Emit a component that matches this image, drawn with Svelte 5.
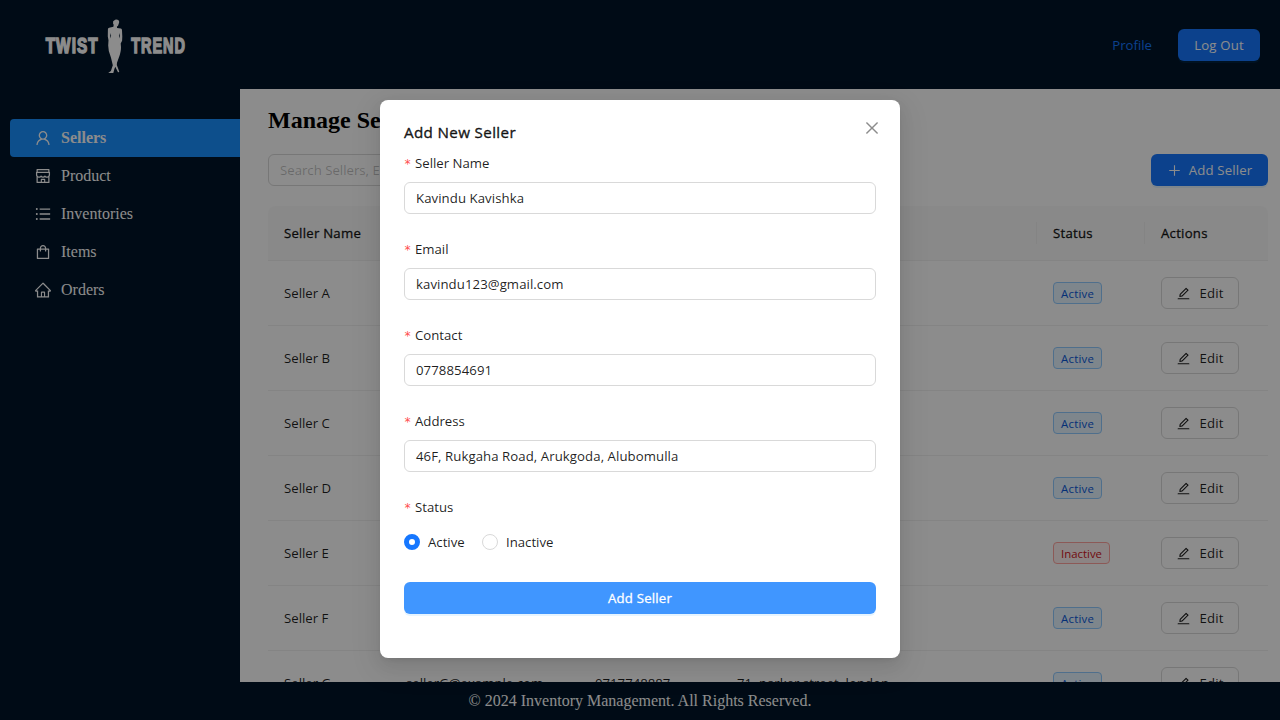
<script>
  const paths = {
    user: 'M858.5 763.6a374 374 0 00-80.6-119.5 375.63 375.63 0 00-119.5-80.6c-.4-.2-.8-.3-1.2-.5C719.5 518 760 444.7 760 362c0-137-111-248-248-248S264 225 264 362c0 82.7 40.5 156 102.8 201.1-.4.2-.8.3-1.2.5-44.8 18.9-85 46-119.5 80.6a375.63 375.63 0 00-80.6 119.5A371.7 371.7 0 00136 901.8a8 8 0 008 8.2h60c4.4 0 7.9-3.5 8-7.8 2-77.2 33-149.5 87.8-204.3 56.7-56.7 132-87.9 212.2-87.9s155.5 31.2 212.2 87.9C779 752.7 810 825 812 902.2c.1 4.4 3.6 7.8 8 7.8h60a8 8 0 008-8.2c-1-47.8-10.9-94.3-29.5-138.2zM512 534c-45.9 0-89.1-17.9-121.6-50.4S340 407.9 340 362c0-45.9 17.9-89.1 50.4-121.6S466.1 190 512 190s89.1 17.9 121.6 50.4S684 316.1 684 362c0 45.9-17.9 89.1-50.4 121.6S557.9 534 512 534z',
    shop: 'M882 272.1V144c0-17.7-14.3-32-32-32H174c-17.7 0-32 14.3-32 32v128.1c-16.7 1-30 14.9-30 31.9v131.7a177 177 0 0014.4 70.4c4.3 10.2 9.6 19.8 15.6 28.9v345c0 17.6 14.3 32 32 32h676c17.7 0 32-14.3 32-32V535a175 175 0 0015.6-28.9c9.5-22.3 14.4-46 14.4-70.4V304c0-17-13.3-30.9-30-31.9zM214 184h596v88H214v-88zm362 656.1H448V736h128v104.1zm234 0H640V704c0-17.7-14.3-32-32-32H416c-17.7 0-32 14.3-32 32v136.1H214V597.9c2.9 1.4 5.9 2.8 9 4 22.3 9.4 46 14.1 70.4 14.1s48-4.7 70.4-14.1c13.8-5.8 26.8-13.2 38.7-22.1.2-.1.4-.1.6 0a180.4 180.4 0 0038.7 22.1c22.3 9.4 46 14.1 70.4 14.1 24.4 0 48-4.7 70.4-14.1 13.8-5.8 26.8-13.2 38.7-22.1.2-.1.4-.1.6 0a180.4 180.4 0 0038.7 22.1c22.3 9.4 46 14.1 70.4 14.1 24.4 0 48-4.7 70.4-14.1 3-1.3 6-2.6 9-4v242.2zm30-404.4c0 59.8-49 108.3-109.3 108.3-40.8 0-76.4-22.1-95.2-54.9-2.9-5-8.1-8.1-13.9-8.1h-.6c-5.7 0-11 3.1-13.9 8.1A109.24 109.24 0 01512 544c-40.7 0-76.2-22-95-54.7-3-5.1-8.4-8.3-14.3-8.3s-11.4 3.2-14.3 8.3a109.63 109.63 0 01-95.1 54.7C233 544 184 495.5 184 435.7v-91.2c0-.3.2-.5.5-.5h655c.3 0 .5.2.5.5v91.2z',
    list: 'M912 192H328c-4.4 0-8 3.6-8 8v56c0 4.4 3.6 8 8 8h584c4.4 0 8-3.6 8-8v-56c0-4.4-3.6-8-8-8zm0 284H328c-4.4 0-8 3.6-8 8v56c0 4.4 3.6 8 8 8h584c4.4 0 8-3.6 8-8v-56c0-4.4-3.6-8-8-8zm0 284H328c-4.4 0-8 3.6-8 8v56c0 4.4 3.6 8 8 8h584c4.4 0 8-3.6 8-8v-56c0-4.4-3.6-8-8-8zM104 228a56 56 0 10112 0 56 56 0 10-112 0zm0 284a56 56 0 10112 0 56 56 0 10-112 0zm0 284a56 56 0 10112 0 56 56 0 10-112 0z',
    bag: 'M832 312H696v-16c0-101.6-82.4-184-184-184s-184 82.4-184 184v16H192c-17.7 0-32 14.3-32 32v536c0 17.7 14.3 32 32 32h640c17.7 0 32-14.3 32-32V344c0-17.7-14.3-32-32-32zm-432-16c0-61.9 50.1-112 112-112s112 50.1 112 112v16H400v-16zm392 544H232V384h96v88c0 4.4 3.6 8 8 8h56c4.4 0 8-3.6 8-8v-88h224v88c0 4.4 3.6 8 8 8h56c4.4 0 8-3.6 8-8v-88h96v456z',
    home: 'M946.5 505L560.1 118.8l-25.9-25.9a31.5 31.5 0 00-44.4 0L77.5 505a63.9 63.9 0 00-18.8 46c.4 35.2 29.7 63.3 64.9 63.3h42.5V940h691.8V614.3h43.4c17.1 0 33.2-6.7 45.3-18.8a63.6 63.6 0 0018.7-45.3c0-17-6.7-33.1-18.8-45.2zM568 868H456V664h112v204zm217.9-325.7V868H632V640c0-22.1-17.9-40-40-40H432c-22.1 0-40 17.9-40 40v228H238.1V542.3h-96l370-369.7 23.1 23.1L882 542.3h-96.1z',
    edit: 'M257.7 752c2 0 4-.2 6-.5L431.9 722c2-.4 3.9-1.3 5.3-2.8l423.9-423.9a9.96 9.96 0 000-14.1L694.9 114.9c-1.9-1.9-4.4-2.9-7.1-2.9s-5.2 1-7.1 2.9L256.8 538.8c-1.5 1.5-2.4 3.3-2.8 5.3l-29.5 168.2a33.5 33.5 0 009.4 29.8c6.6 6.4 14.9 9.9 23.8 9.9zm67.4-174.4L687.8 215l73.3 73.3-362.7 362.6-88.9 15.7 15.6-89zM880 836H144c-17.7 0-32 14.3-32 32v36c0 4.4 3.6 8 8 8h784c4.4 0 8-3.6 8-8v-36c0-17.7-14.3-32-32-32z',
    plus: 'M482 152h60q8 0 8 8v704q0 8-8 8h-60q-8 0-8-8V160q0-8 8-8zM160 474h704q8 0 8 8v60q0 8-8 8H160q-8 0-8-8v-60q0-8 8-8z',
    close: 'M799.86 166.31c.02 0 .04.02.08.06l57.69 57.7c.04.03.05.05.06.08a.12.12 0 010 .06c0 .03-.02.05-.06.09L569.93 512l287.7 287.7c.04.04.05.06.06.09a.12.12 0 010 .07c0 .02-.02.04-.06.08l-57.7 57.69c-.03.04-.05.05-.07.06a.12.12 0 01-.07 0c-.03 0-.05-.02-.09-.06L512 569.93l-287.7 287.7c-.04.04-.06.05-.09.06a.12.12 0 01-.07 0c-.02 0-.04-.02-.08-.06l-57.69-57.7c-.04-.03-.05-.05-.06-.07a.12.12 0 010-.07c0-.03.02-.05.06-.09L454.07 512l-287.7-287.7c-.04-.04-.05-.06-.06-.09a.12.12 0 010-.07c0-.02.02-.04.06-.08l57.7-57.69c.03-.04.05-.05.07-.06a.12.12 0 01.07 0c.03 0 .05.02.09.06L512 454.07l287.7-287.7c.04-.04.06-.05.09-.06a.12.12 0 01.07 0z'
  };

  const menu = [
    { label: 'Sellers', icon: 'user', active: true },
    { label: 'Product', icon: 'shop' },
    { label: 'Inventories', icon: 'list' },
    { label: 'Items', icon: 'bag' },
    { label: 'Orders', icon: 'home' }
  ];

  const sellers = 'ABCDEFG'.split('').map((l) => ({
    name: `Seller ${l}`,
    email: `seller${l}@example.com`,
    contact: '0717748887',
    address: '71, parker street, london',
    status: l === 'E' ? 'Inactive' : 'Active'
  }));

  const fields = [
    { label: 'Seller Name', value: 'Kavindu Kavishka' },
    { label: 'Email', value: 'kavindu123@gmail.com' },
    { label: 'Contact', value: '0778854691' },
    { label: 'Address', value: '46F, Rukgaha Road, Arukgoda, Alubomulla' }
  ];
</script>

{#snippet icon(name, size)}
  <svg class="icon" width={size} height={size} viewBox="0 0 1024 1024" fill="currentColor"><path d={paths[name]} /></svg>
{/snippet}

<div class="page">
  <header>
    <svg class="logo" width="144" height="56" viewBox="0 0 144 56" fill="#fff">
      <g class="wordmark" stroke="#fff" stroke-width="1.5">
        <text x="1.700" y="35.8" textLength="53" lengthAdjust="spacingAndGlyphs">TWIST</text>
        <text x="87.200" y="35.8" textLength="54.8" lengthAdjust="spacingAndGlyphs">TREND</text>
      </g>
      <path d="M69.200 5.200c-.4-1 .5-1.500 1-1.700.8-1.200 3.200-1.300 4.300-.2 1 .9.8 2.600.1 3.700-.3 1.400-.7 2.200-1.700 2.500l.2 1.600 3.700.5c.9.300 1.200 1 1.200 2l.3 5.900-.2 4.200-1.400 2.800.3 3.800c0 3-.6 5.800-1.400 8.300l-2.600 7.200-.2 2.200 1.600 4.200.9 2.900-1.300.1-2.700-5.500-.9 2.400-1.200 4.300-4.700.2v-.9l2.400-1.700 1.900-5.800-1.800-7.500-2.200-6.600-.6-5.700.3-5.200-.7-3.600.1-7.200c.1-1 .5-1.500 1.300-1.700l4.200-.9.3-2.100c-.4-.6-.6-1.200-.7-1.800z" />
      <path d="M66.100 16l1 2.800-.7 2.600zM75.900 16l-1 2.800.7 2.600z" fill="#001529" />
    </svg>
    <nav>
      <span class="profile">Profile</span>
      <button class="btn primary logout">Log Out</button>
    </nav>
  </header>

  <div class="body">
    <aside>
      {#each menu as m}
        <div class="item" class:active={m.active}>{@render icon(m.icon, 18)}<span>{m.label}</span></div>
      {/each}
    </aside>

    <main>
      <h2>Manage Sellers</h2>
      <div class="toolbar">
        <div class="search">Search Sellers, E...</div>
        <button class="btn primary add">{@render icon('plus', 15)}<span>Add Seller</span></button>
      </div>
      <div class="table">
        <div class="row head">
          <div>Seller Name</div><div>Email</div><div>Contact</div><div>Address</div><div>Status</div><div>Actions</div>
        </div>
        {#each sellers as s}
          <div class="row">
            <div>{s.name}</div>
            <div>{s.email}</div>
            <div>{s.contact}</div>
            <div>{s.address}</div>
            <div><span class="tag" class:red={s.status === 'Inactive'}>{s.status}</span></div>
            <div><button class="btn edit">{@render icon('edit', 15)}<span>Edit</span></button></div>
          </div>
        {/each}
      </div>
    </main>
  </div>

  <footer>© 2024 Inventory Management. All Rights Reserved.</footer>

  <div class="mask">
    <div class="modal">
      <div class="title"><span>Add New Seller</span><span class="close">{@render icon('close', 18)}</span></div>
      {#each fields as f}
        <div class="field">
          <div class="label"><i>*</i>{f.label}</div>
          <div class="input">{f.value}</div>
        </div>
      {/each}
      <div class="label"><i>*</i>Status</div>
      <div class="radios">
        <span class="radio on"></span><span class="opt first">Active</span>
        <span class="radio"></span><span class="opt">Inactive</span>
      </div>
      <button class="btn submit">Add Seller</button>
    </div>
  </div>
</div>

<style>
  :global(body) { margin: 0; overflow: hidden; }
  * { box-sizing: border-box; }
  .page {
    position: relative; width: 1280px; height: 720px; overflow: hidden;
    display: flex; flex-direction: column; background: #fff;
    font-family: 'Open Sans', sans-serif; font-size: 13.2px; line-height: 22px; color: rgba(0, 0, 0, 0.88);
  }
  .icon { display: block; flex: none; }
  header {
    height: 89px; flex: none; background: #001529; padding: 0 20px 0 44px;
    display: flex; align-items: center; justify-content: space-between;
  }
  .logo { display: block; }
  .wordmark { font: 700 21.5px 'Liberation Sans', sans-serif; letter-spacing: 1.5px; }
  nav { display: flex; align-items: center; gap: 26px; }
  .profile { color: #1677ff; }
  .btn {
    height: 32px; border: 0; border-radius: 6px; padding: 0; font: inherit; color: inherit;
    display: flex; align-items: center; justify-content: center; gap: 8px; white-space: nowrap;
  }
  .primary { background: #1677ff; color: #fff; letter-spacing: 0.15px; box-shadow: 0 2px 0 rgba(5, 145, 255, 0.1); }
  .logout { width: 82px; }
  .body { flex: 1; min-height: 0; display: flex; overflow: hidden; }
  aside {
    width: 240px; flex: none; background: #001529; padding: 30px 0 0 10px;
    font: 16px/38px 'Liberation Serif', serif; color: #fff;
  }
  .item { height: 38px; display: flex; align-items: center; gap: 9px; padding-left: 24px; }
  .active { background: #1890ff; font-weight: 700; border-radius: 4px 0 0 4px; }
  main { flex: 1; min-width: 0; padding: 17px 12px 0 28px; }
  h2 { margin: 0; font: 700 24px/28px 'Liberation Serif', serif; color: #000; }
  .toolbar { display: flex; justify-content: space-between; margin: 20px 0; }
  .search {
    width: 300px; height: 32px; border: 1px solid #d9d9d9; border-radius: 6px;
    padding: 4px 11px; color: rgba(0, 0, 0, 0.25);
  }
  .add { width: 117px; gap: 7px; }
  .row {
    display: grid; grid-template-columns: 122px 189px 142px 316px 108px 123px;
    height: 65px; align-items: center; border-bottom: 1px solid #f0f0f0;
  }
  .row > div { padding-left: 16px; white-space: nowrap; }
  .head {
    height: 55px; background: #fafafa; border-radius: 8px 8px 0 0;
    letter-spacing: 0.24px; -webkit-text-stroke: 0.35px currentColor;
  }
  .head > div + div { border-left: 1px solid #f0f0f0; margin-left: -1px; }
  .tag {
    display: inline-block; vertical-align: top; height: 22px; padding: 1px 7px 0; border: 1px solid #91caff; border-radius: 4px;
    background: #e6f4ff; color: #0958d9; font-size: 11.4px; letter-spacing: 0.25px; line-height: 20px;
  }
  .red { border-color: #ffa39e; background: #fff1f0; color: #cf1322; letter-spacing: 0; }
  .edit { width: 78px; border: 1px solid #d9d9d9; background: #fff; letter-spacing: 0.2px; }
  footer {
    height: 38px; flex: none; background: #001529; color: #fff; text-align: center;
    font: 16px/38px 'Liberation Serif', serif;
  }
  .mask { position: absolute; inset: 0; background: rgba(0, 0, 0, 0.45); }
  .modal {
    width: 520px; height: 558px; margin: 100px auto 0; padding: 20px 24px; background: #fff; border-radius: 8px;
    box-shadow: 0 6px 16px rgba(0, 0, 0, 0.08), 0 3px 6px -4px rgba(0, 0, 0, 0.12), 0 9px 28px 8px rgba(0, 0, 0, 0.05);
  }
  .title {
    height: 32px; display: flex; justify-content: space-between; font-size: 15.2px; line-height: 24px;
    letter-spacing: 0.35px; -webkit-text-stroke: 0.4px currentColor;
  }
  .close { color: rgba(0, 0, 0, 0.45); margin: -1px -5px 0 0; }
  .field { height: 86px; }
  .label { height: 30px; display: flex; line-height: 22px; }
  .label i { width: 11px; color: #ff4d4f; font: 12px/24px 'DejaVu Sans Mono', monospace; }
  .input { height: 32px; border: 1px solid #d9d9d9; border-radius: 6px; padding: 4px 11px; letter-spacing: 0.07px; }
  .radios { display: flex; align-items: center; height: 32px; margin-bottom: 24px; }
  .radio { width: 16px; height: 16px; border: 1px solid #d9d9d9; border-radius: 50%; margin-right: 8px; }
  .on { border: 5px solid #1677ff; }
  .first { width: 54px; }
  .submit {
    width: 100%; background: #4096ff; color: #fff; letter-spacing: 0.2px; -webkit-text-stroke: 0.3px currentColor;
    box-shadow: 0 2px 0 rgba(5, 145, 255, 0.1);
  }
</style>
